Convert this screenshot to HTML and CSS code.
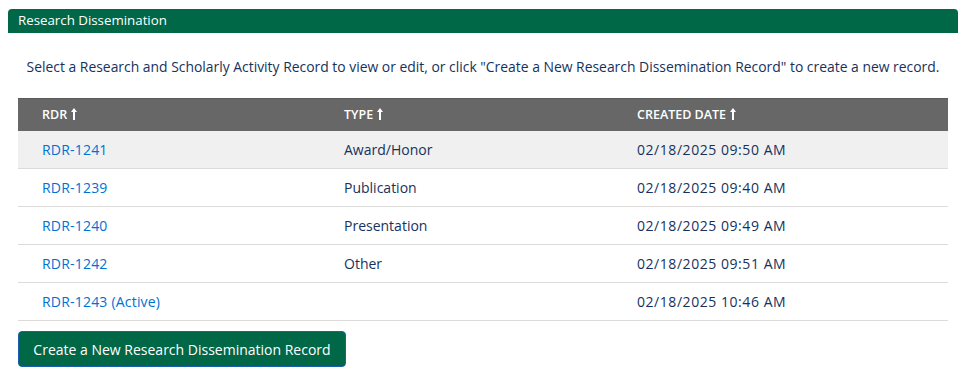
FILE: index.html
```html
<!DOCTYPE html>
<html lang="en">
<head>
  <meta charset="UTF-8">
  <meta name="viewport" content="width=device-width, initial-scale=1.0">
  <title>Research Dissemination</title>
  <link rel="stylesheet" href="styles.css">
</head>
<body>
  <div class="panel">
    <div class="panel-header">Research Dissemination</div>
    <p class="intro">Select a Research and Scholarly Activity Record to view or edit, or click "Create a New Research Dissemination Record" to create a new record.</p>
    <table class="records">
      <thead>
        <tr>
          <th class="col-rdr">RDR <svg class="sort" width="6" height="12" viewBox="0 0 6 12"><path d="M3 0 L6 4 L4 4 L4 12 L2 12 L2 4 L0 4 Z" fill="#fff"/></svg></th>
          <th class="col-type">TYPE <svg class="sort" width="6" height="12" viewBox="0 0 6 12"><path d="M3 0 L6 4 L4 4 L4 12 L2 12 L2 4 L0 4 Z" fill="#fff"/></svg></th>
          <th class="col-date">CREATED DATE <svg class="sort" width="6" height="12" viewBox="0 0 6 12"><path d="M3 0 L6 4 L4 4 L4 12 L2 12 L2 4 L0 4 Z" fill="#fff"/></svg></th>
        </tr>
      </thead>
      <tbody>
        <tr class="hover">
          <td><a href="#">RDR-1241</a></td>
          <td>Award/Honor</td>
          <td class="date">02/18/2025 09:50 AM</td>
        </tr>
        <tr>
          <td><a href="#">RDR-1239</a></td>
          <td>Publication</td>
          <td class="date">02/18/2025 09:40 AM</td>
        </tr>
        <tr>
          <td><a href="#">RDR-1240</a></td>
          <td>Presentation</td>
          <td class="date">02/18/2025 09:49 AM</td>
        </tr>
        <tr>
          <td><a href="#">RDR-1242</a></td>
          <td>Other</td>
          <td class="date">02/18/2025 09:51 AM</td>
        </tr>
        <tr>
          <td><a href="#">RDR-1243 (Active)</a></td>
          <td></td>
          <td class="date">02/18/2025 10:46 AM</td>
        </tr>
      </tbody>
    </table>
    <button class="btn-create" type="button">Create a New Research Dissemination Record</button>
  </div>
</body>
</html>
```

FILE: styles.css
```css
body {
  margin: 0;
  padding: 9px 8px 0 8px;
  font-family: 'Open Sans', 'Noto Sans', sans-serif;
  color: #16325c;
  background: #fff;
}
.panel {
  width: 950px;
}
.panel-header {
  background: #006747;
  color: #fff;
  font-size: 13.3px;
  font-weight: 500;
  height: 24px;
  line-height: 23px;
  padding-left: 10px;
  border-radius: 4px 4px 0 0;
}
.intro {
  margin: 0;
  padding: 24px 0 0 0;
  height: 41px;
  text-align: center;
  font-size: 13.9px;
  line-height: 20px;
}
.records {
  margin: 0 10px;
  width: 930px;
  border-collapse: collapse;
  table-layout: fixed;
}
.records th {
  background: #676767;
  color: #fff;
  font-size: 12.5px;
  font-weight: 600;
  text-align: left;
  height: 30px;
  padding: 0 0 2px 24px;
  border-top: 1px solid #5a5a5a;
}
.col-rdr { width: 278px; }
.col-type { width: 269px; }
.sort {
  vertical-align: -1px;
  margin-left: 1px;
}
.records td {
  height: 37px;
  padding: 0 0 0 24px;
  font-size: 14px;
  border-bottom: 1px solid #dddbda;
}
.records td.date {
  letter-spacing: 0.55px;
}
.records tr.hover td {
  background: #f0f0f0;
}
.records a {
  color: #0070d2;
  text-decoration: none;
  letter-spacing: 0.2px;
}
.btn-create {
  margin: 10px 0 0 10px;
  width: 328px;
  height: 36px;
  background: #006747;
  color: #fff;
  border: 1px solid #1b5fae;
  border-radius: 4px;
  font-family: 'Open Sans', 'Noto Sans', sans-serif;
  font-size: 14px;
  padding: 0;
}
```
